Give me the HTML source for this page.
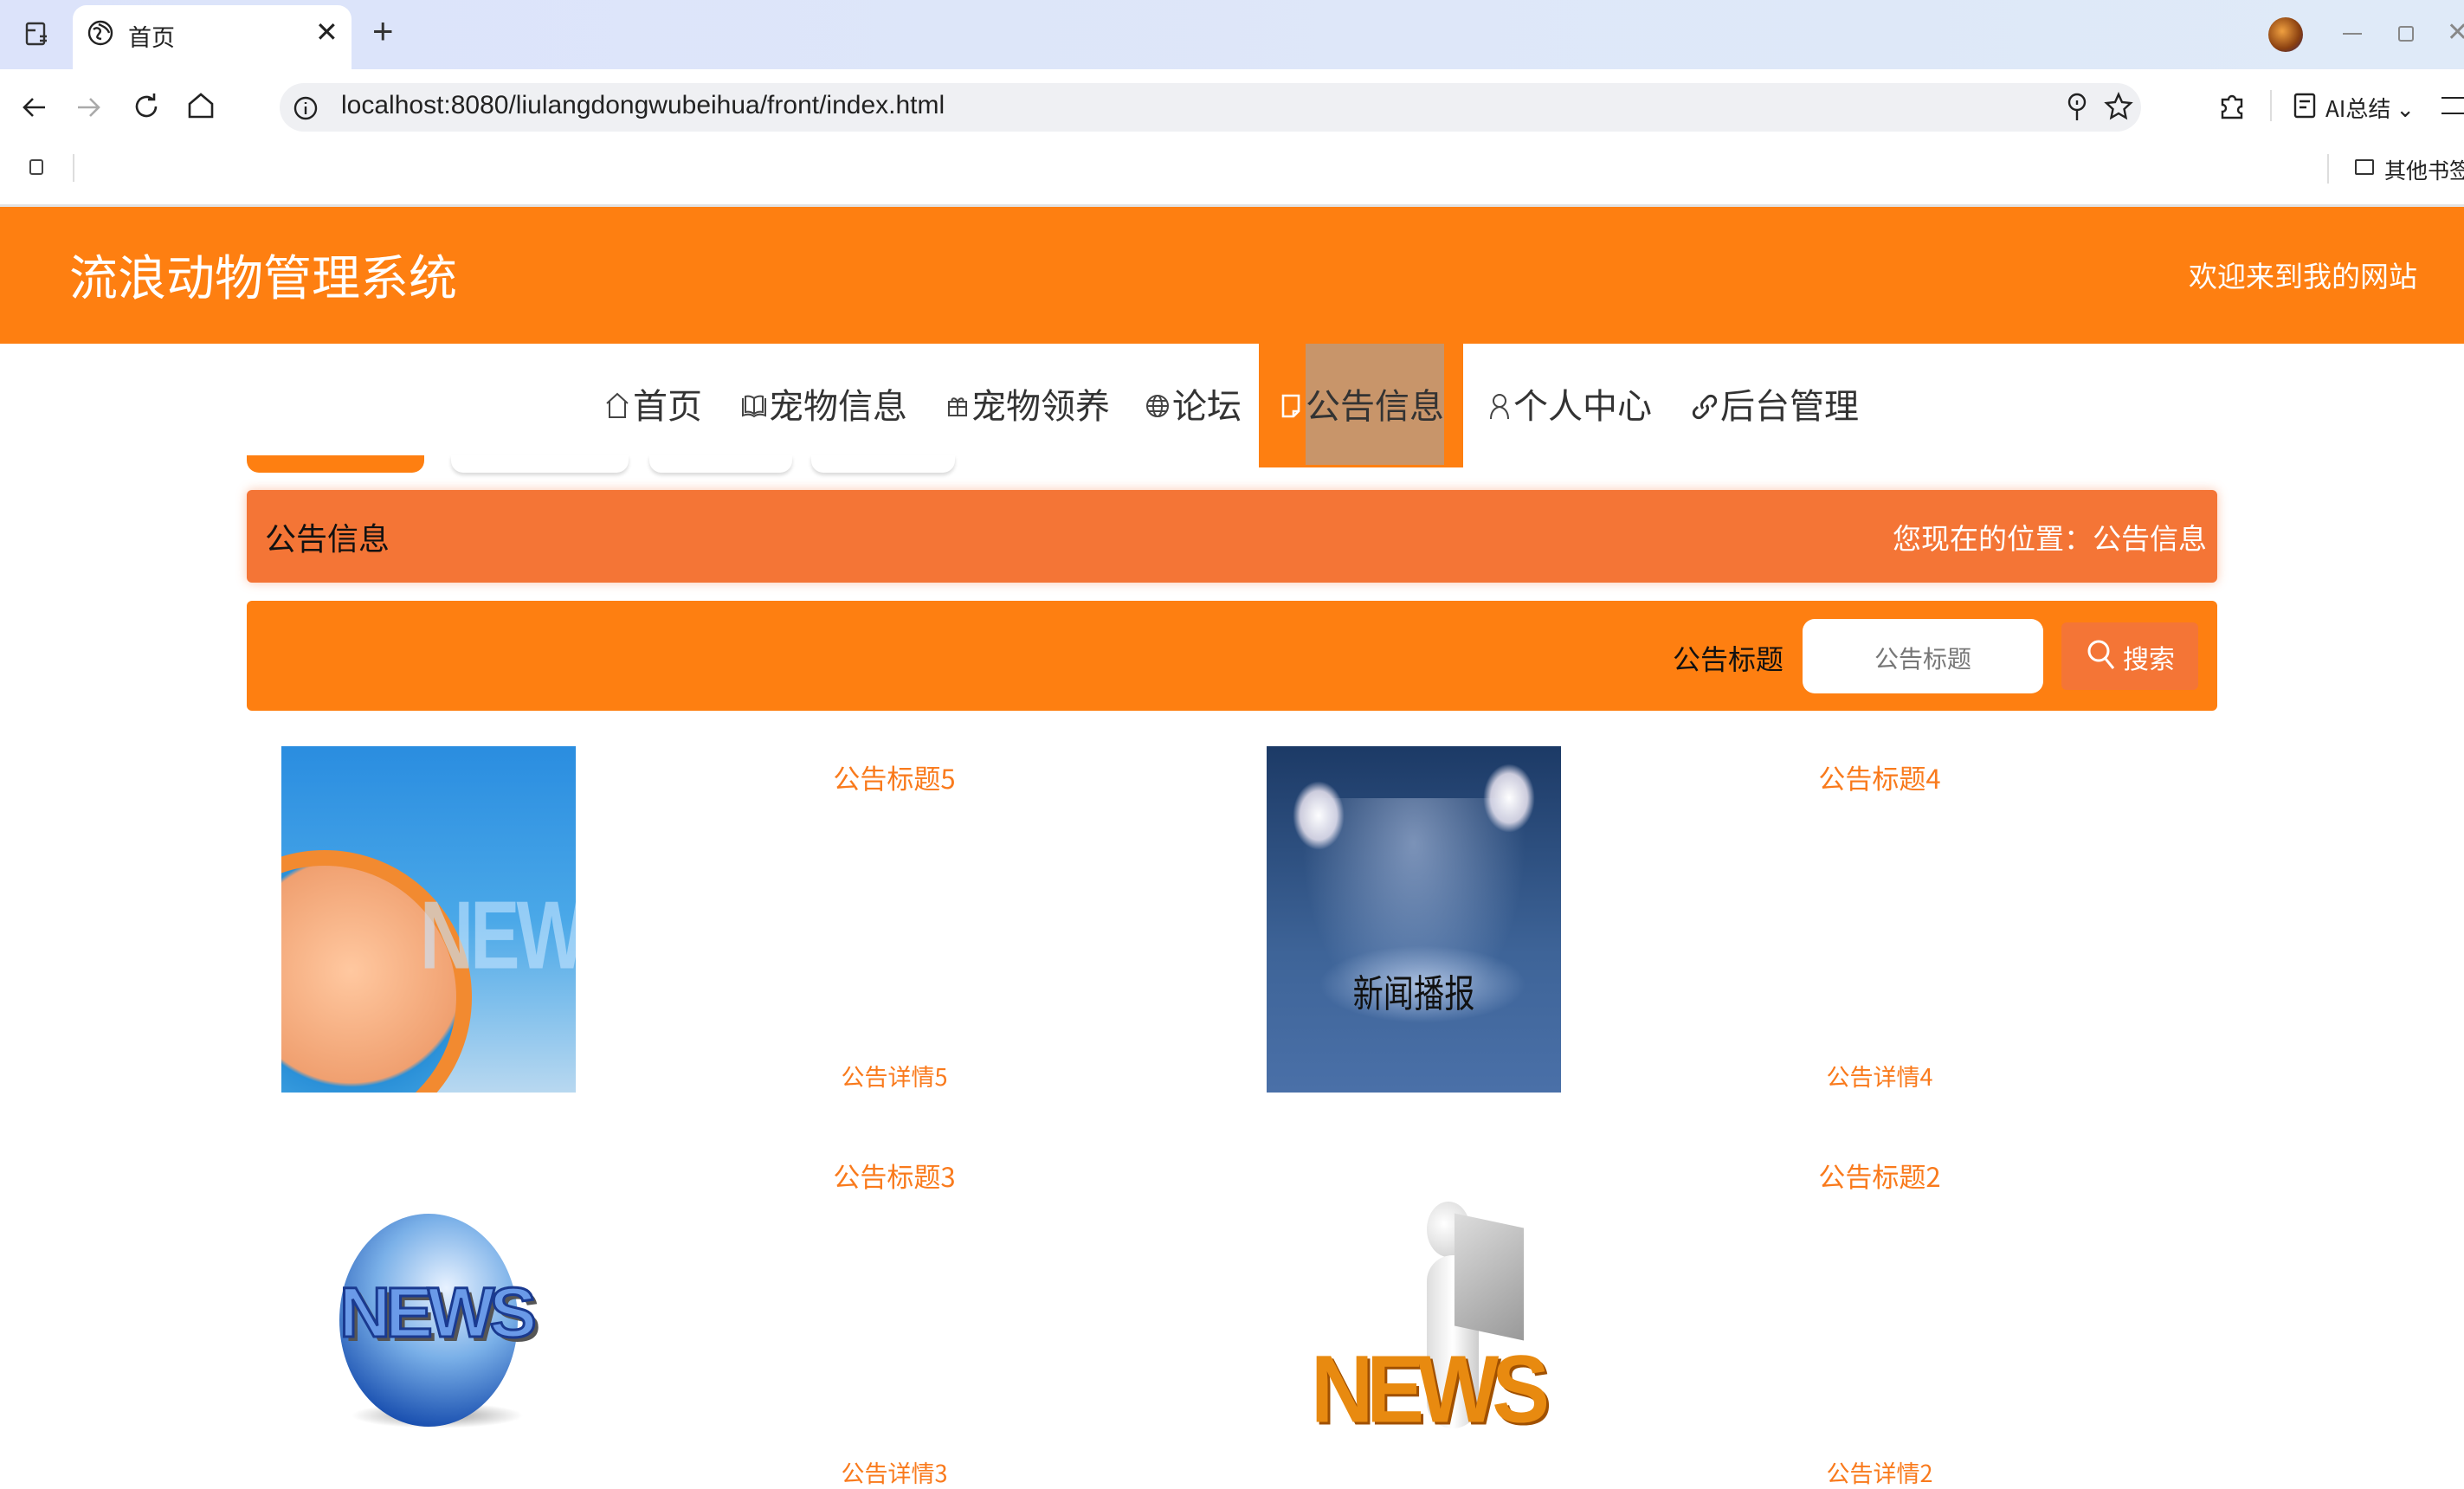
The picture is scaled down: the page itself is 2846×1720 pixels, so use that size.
<!DOCTYPE html>
<html><head><meta charset="utf-8">
<style>
*{margin:0;padding:0;box-sizing:border-box}
body{width:2846px;height:1704px;overflow:hidden;background:#fff;font-family:"Liberation Sans","Noto Sans CJK SC",sans-serif;position:relative}
.a{position:absolute}
.cn{font-family:"Noto Sans CJK SC","WenQuanYi Zen Hei",sans-serif}
.nt{position:absolute;top:438px;font-size:40px;line-height:56px;color:#333;white-space:nowrap}
.ni{position:absolute;top:452px}
</style></head><body>
<!-- tab bar -->
<div class="a" style="left:0;top:0;width:2846px;height:80px;background:linear-gradient(90deg,#dce3fa,#dfeaf8)"></div>
<div class="a" style="left:84px;top:6px;width:322px;height:76px;background:#fff;border-radius:16px 16px 0 0"></div>
<svg class="a" style="left:28px;top:24px" width="30" height="30" viewBox="0 0 30 30" fill="none" stroke="#333" stroke-width="2.4"><rect x="3" y="3" width="20" height="24" rx="2"/><path d="M3 11h10M18 18h8M18 23h8"/></svg>
<svg class="a" style="left:100px;top:22px" width="32" height="32" viewBox="0 0 32 32" fill="none" stroke="#222" stroke-width="2.4"><circle cx="16" cy="16" r="13"/><path d="M8 12c4-4 10 0 7 4s-5 6 2 7M14 6c4 2 10 4 12 10"/></svg>
<div class="a cn" style="left:148px;top:22px;font-size:27px;color:#222">首页</div>
<div class="a" style="left:364px;top:18px;font-size:32px;color:#222">✕</div>
<div class="a" style="left:430px;top:12px;font-size:42px;color:#333">+</div>
<div class="a" style="left:2620px;top:20px;width:40px;height:40px;border-radius:50%;background:radial-gradient(circle at 40% 40%,#f0a040,#8a4010 60%,#302060)"></div>
<div class="a" style="left:2706px;top:38px;width:22px;height:2px;background:#888"></div>
<div class="a" style="left:2770px;top:30px;width:18px;height:18px;border:2px solid #888;border-radius:3px"></div>
<div class="a" style="left:2826px;top:20px;font-size:30px;color:#888">✕</div>
<!-- address row -->
<svg class="a" style="left:22px;top:106px" width="36" height="36" viewBox="0 0 36 36" fill="none" stroke="#222" stroke-width="2.6"><path d="M30 18H6M16 8L6 18l10 10"/></svg>
<svg class="a" style="left:84px;top:106px" width="36" height="36" viewBox="0 0 36 36" fill="none" stroke="#aaa" stroke-width="2.6"><path d="M6 18h24M20 8l10 10-10 10"/></svg>
<svg class="a" style="left:150px;top:104px" width="38" height="38" viewBox="0 0 38 38" fill="none" stroke="#222" stroke-width="2.6"><path d="M30 19a11 11 0 1 1-4-8.5M28 4v7h-7"/></svg>
<svg class="a" style="left:214px;top:104px" width="36" height="36" viewBox="0 0 36 36" fill="none" stroke="#222" stroke-width="2.6"><path d="M5 16L18 5l13 11v15H5z"/></svg>
<div class="a" style="left:323px;top:96px;width:2150px;height:56px;background:#eff0f3;border-radius:28px"></div>
<svg class="a" style="left:338px;top:110px" width="30" height="30" viewBox="0 0 30 30" fill="none" stroke="#222" stroke-width="2.4"><circle cx="15" cy="15" r="12"/><path d="M15 13v9M15 8v2"/></svg>
<div class="a" style="left:394px;top:105px;font-size:30px;color:#222">localhost:8080/liulangdongwubeihua/front/index.html</div>
<svg class="a" style="left:2384px;top:106px" width="30" height="36" viewBox="0 0 30 36" fill="none" stroke="#222" stroke-width="2.4"><circle cx="15" cy="12" r="9"/><path d="M15 21v12M15 10v5"/></svg>
<svg class="a" style="left:2430px;top:106px" width="34" height="34" viewBox="0 0 34 34" fill="none" stroke="#222" stroke-width="2.4"><path d="M17 3l4 9 10 1-7.5 7 2 10-8.5-5-8.5 5 2-10L3 13l10-1z"/></svg>
<svg class="a" style="left:2562px;top:106px" width="34" height="34" viewBox="0 0 34 34" fill="none" stroke="#222" stroke-width="2.4"><path d="M5 9h7a4 4 0 1 1 8 0h7v8a4 4 0 1 0 0 8v5H5v-7a4 4 0 1 0 0-8z"/></svg>
<div class="a" style="left:2622px;top:104px;width:2px;height:36px;background:#ddd"></div>
<svg class="a" style="left:2648px;top:106px" width="30" height="34" viewBox="0 0 30 34" fill="none" stroke="#222" stroke-width="2.4"><rect x="3" y="3" width="22" height="26" rx="2"/><path d="M8 11h12M8 18h8"/></svg>
<div class="a cn" style="left:2686px;top:106px;font-size:26px;color:#222">AI总结 ⌄</div>
<div class="a" style="left:2820px;top:112px;width:26px;height:20px;border-top:2.4px solid #222;border-bottom:2.4px solid #222"></div>
<!-- bookmarks row -->
<div class="a" style="left:34px;top:184px;width:16px;height:18px;border:2.4px solid #444;border-radius:3px"></div>
<div class="a" style="left:84px;top:178px;width:2px;height:32px;background:#ddd"></div>
<div class="a" style="left:2688px;top:178px;width:2px;height:34px;background:#ddd"></div>
<div class="a" style="left:2720px;top:184px;width:22px;height:18px;border:2.4px solid #333;border-radius:2px"></div>
<div class="a cn" style="left:2754px;top:178px;font-size:25px;color:#222;white-space:nowrap">其他书签</div>
<div class="a" style="left:0;top:236px;width:2846px;height:3px;background:#e2e2e2"></div>
<!-- header -->
<div class="a" style="left:0;top:239px;width:2846px;height:158px;background:#fe7f11"></div>
<div class="a cn" style="left:80px;top:282px;font-size:56px;color:#fff;line-height:72px">流浪动物管理系统</div>
<div class="a cn" style="left:2528px;top:295px;font-size:33px;color:#fff;line-height:44px">欢迎来到我的网站</div>
<!-- nav -->
<div class="a" style="left:1454px;top:397px;width:236px;height:143px;background:#fe7f11"></div>
<div class="a" style="left:1508px;top:397px;width:160px;height:140px;background:#c8956a"></div>
<svg class="ni" style="left:698px" width="30" height="32" viewBox="0 0 30 32" fill="none" stroke="#444" stroke-width="2"><path d="M3 14L15 3l12 11M6 12v18h18V12"/></svg>
<span class="nt cn" style="left:731px">首页</span>
<svg class="ni" style="left:856px" width="30" height="32" viewBox="0 0 30 32" fill="none" stroke="#444" stroke-width="2"><path d="M2 8v20c5-2 9-2 13 1 4-3 8-3 13-1V8M5 6v18c4-1 7 0 10 2 3-2 6-3 10-2V6c-4-1-7 0-10 2-3-2-6-3-10-2zM15 8v18"/></svg>
<span class="nt cn" style="left:888px">宠物信息</span>
<svg class="ni" style="left:1094px;top:456px" width="24" height="26" viewBox="0 0 24 26" fill="none" stroke="#444" stroke-width="2"><rect x="2" y="8" width="20" height="16"/><path d="M2 14h20M12 8v16M12 8c-3-6-8-4-6 0M12 8c3-6 8-4 6 0"/></svg>
<span class="nt cn" style="left:1122px">宠物领养</span>
<svg class="ni" style="left:1323px;top:454px" width="28" height="30" viewBox="0 0 28 30" fill="none" stroke="#444" stroke-width="2"><circle cx="14" cy="15" r="12"/><ellipse cx="14" cy="15" rx="5" ry="12"/><path d="M2 15h24M4 9h20M4 21h20"/></svg>
<span class="nt cn" style="left:1354px">论坛</span>
<svg class="ni" style="left:1479px;top:454px" width="24" height="30" viewBox="0 0 24 30" fill="none" stroke="#fff" stroke-width="2.6"><path d="M3 3h18v18l-6 6H3zM15 27v-6h6"/></svg>
<span class="nt cn" style="left:1508px">公告信息</span>
<svg class="ni" style="left:1719px;top:454px" width="26" height="32" viewBox="0 0 26 32" fill="none" stroke="#444" stroke-width="2"><circle cx="13" cy="9" r="7"/><path d="M3 30c0-8 4-13 10-14 6 1 10 6 10 14"/></svg>
<span class="nt cn" style="left:1748px">个人中心</span>
<svg class="ni" style="left:1953px;top:454px" width="32" height="32" viewBox="0 0 32 32" fill="none" stroke="#333" stroke-width="3"><path d="M14 18a6 6 0 0 1 0-8l5-5a5.5 5.5 0 0 1 8 8l-3 3M18 14a6 6 0 0 1 0 8l-5 5a5.5 5.5 0 0 1-8-8l3-3"/></svg>
<span class="nt cn" style="left:1987px">后台管理</span>
<!-- partial buttons -->
<div class="a" style="left:285px;top:526px;width:205px;height:20px;background:#fe7f11;border-radius:0 0 14px 14px"></div>
<div class="a" style="left:521px;top:526px;width:205px;height:20px;background:#fff;border-radius:0 0 14px 14px;box-shadow:0 3px 4px rgba(0,0,0,.15)"></div>
<div class="a" style="left:750px;top:526px;width:165px;height:20px;background:#fff;border-radius:0 0 14px 14px;box-shadow:0 3px 4px rgba(0,0,0,.15)"></div>
<div class="a" style="left:937px;top:526px;width:166px;height:20px;background:#fff;border-radius:0 0 14px 14px;box-shadow:0 3px 4px rgba(0,0,0,.15)"></div>
<!-- breadcrumb -->
<div class="a" style="left:285px;top:566px;width:2276px;height:107px;background:#f47536;border-radius:6px;box-shadow:0 0 12px rgba(244,117,54,.4)"></div>
<div class="a cn" style="left:306px;top:597px;font-size:36px;color:#111;line-height:46px">公告信息</div>
<div class="a cn" style="left:2186px;top:597px;font-size:33px;color:#fff;line-height:46px;white-space:nowrap">您现在的位置：公告信息</div>
<!-- search -->
<div class="a" style="left:285px;top:694px;width:2276px;height:127px;background:#fe7f11;border-radius:6px"></div>
<div class="a cn" style="left:1932px;top:738px;font-size:32px;color:#111;line-height:44px">公告标题</div>
<div class="a" style="left:2082px;top:715px;width:278px;height:86px;background:#fff;border-radius:14px"></div>
<div class="a cn" style="left:2082px;top:740px;width:278px;text-align:center;font-size:28px;color:#777;line-height:40px">公告标题</div>
<div class="a" style="left:2381px;top:719px;width:158px;height:78px;background:#f47536;border-radius:6px"></div>
<svg class="a" style="left:2410px;top:738px" width="34" height="38" viewBox="0 0 34 38" fill="none" stroke="#fff" stroke-width="3"><circle cx="14" cy="14" r="11"/><path d="M22 23l9 11"/></svg>
<div class="a cn" style="left:2452px;top:738px;font-size:30px;color:#fff;line-height:42px">搜索</div>
<!-- card 1 image -->
<div class="a" style="left:325px;top:862px;width:340px;height:400px;overflow:hidden;background:linear-gradient(180deg,#2a8de0,#4aa8e8 50%,#b8d8f0)">
<div class="a" style="left:-120px;top:120px;width:340px;height:340px;border-radius:50%;border:18px solid #f28a30;background:radial-gradient(circle at 60% 40%,#ffc8a0,#f0a070 50%,#2a90d8 52%,#66c0f0)"></div>
<div class="a" style="left:160px;top:170px;font-size:86px;font-weight:bold;color:rgba(200,230,255,.6);letter-spacing:-4px;transform:scaleY(1.3)">NEWS</div>
</div>
<div class="a cn" style="left:833px;top:876px;width:400px;text-align:center;font-size:31px;color:#f97a1c;line-height:44px">公告标题5</div>
<div class="a cn" style="left:833px;top:1224px;width:400px;text-align:center;font-size:27px;color:#f97a1c;line-height:38px">公告详情5</div>
<!-- card 2 image -->
<div class="a" style="left:1463px;top:862px;width:340px;height:400px;overflow:hidden;background:linear-gradient(180deg,#1c3a66,#3e6498 60%,#4a70a8)">
<div class="a" style="left:30px;top:40px;width:60px;height:80px;border-radius:50%;background:radial-gradient(#fff,#ccd 50%,rgba(0,0,0,0) 70%)"></div>
<div class="a" style="left:250px;top:20px;width:60px;height:80px;border-radius:50%;background:radial-gradient(#fff,#ccd 50%,rgba(0,0,0,0) 70%)"></div>
<div class="a" style="left:40px;top:60px;width:260px;height:260px;background:radial-gradient(ellipse at 50% 20%,rgba(220,230,255,.45),rgba(0,0,0,0) 70%)"></div>
<div class="a" style="left:60px;top:230px;width:240px;height:90px;border-radius:50%;background:radial-gradient(rgba(210,225,250,.7),rgba(0,0,0,0) 70%)"></div>
<div class="a cn" style="left:0;top:250px;width:340px;text-align:center;font-size:44px;color:#111;transform:scaleX(.8)">新闻播报</div>
</div>
<div class="a cn" style="left:1971px;top:876px;width:400px;text-align:center;font-size:31px;color:#f97a1c;line-height:44px">公告标题4</div>
<div class="a cn" style="left:1971px;top:1224px;width:400px;text-align:center;font-size:27px;color:#f97a1c;line-height:38px">公告详情4</div>
<!-- row 2 -->
<div class="a" style="left:405px;top:1620px;width:200px;height:30px;border-radius:50%;background:radial-gradient(rgba(0,0,0,.4),rgba(0,0,0,0) 70%)"></div>
<div class="a" style="left:392px;top:1402px;width:206px;height:246px;border-radius:50%;background:radial-gradient(circle at 60% 35%,#e8f2ff,#7ab0e8 40%,#1a50b0 80%)"></div>
<div class="a" style="left:392px;top:1470px;font-size:82px;font-weight:bold;color:#6a9ae8;-webkit-text-stroke:3px #1a3a90;letter-spacing:-6px;text-shadow:5px 5px 0 #555">NEWS</div>
<div class="a cn" style="left:833px;top:1336px;width:400px;text-align:center;font-size:31px;color:#f97a1c;line-height:44px">公告标题3</div>
<div class="a cn" style="left:833px;top:1682px;width:400px;text-align:center;font-size:27px;color:#f97a1c;line-height:38px">公告详情3</div>
<!-- person news -->
<div class="a" style="left:1648px;top:1388px;width:50px;height:64px;border-radius:50%;background:radial-gradient(circle at 40% 40%,#fff,#ccc)"></div>
<div class="a" style="left:1648px;top:1450px;width:60px;height:200px;border-radius:30px;background:linear-gradient(90deg,#ddd,#fff,#ccc)"></div>
<div class="a" style="left:1680px;top:1410px;width:80px;height:130px;background:linear-gradient(135deg,#ddd,#999);transform:skewY(12deg)"></div>
<div class="a" style="left:1514px;top:1548px;font-size:100px;font-weight:bold;color:#e88a10;letter-spacing:-8px;transform:scaleY(1.1);text-shadow:3px 3px 0 #a05000">NEWS</div>
<div class="a cn" style="left:1971px;top:1336px;width:400px;text-align:center;font-size:31px;color:#f97a1c;line-height:44px">公告标题2</div>
<div class="a cn" style="left:1971px;top:1682px;width:400px;text-align:center;font-size:27px;color:#f97a1c;line-height:38px">公告详情2</div>
</body></html>
